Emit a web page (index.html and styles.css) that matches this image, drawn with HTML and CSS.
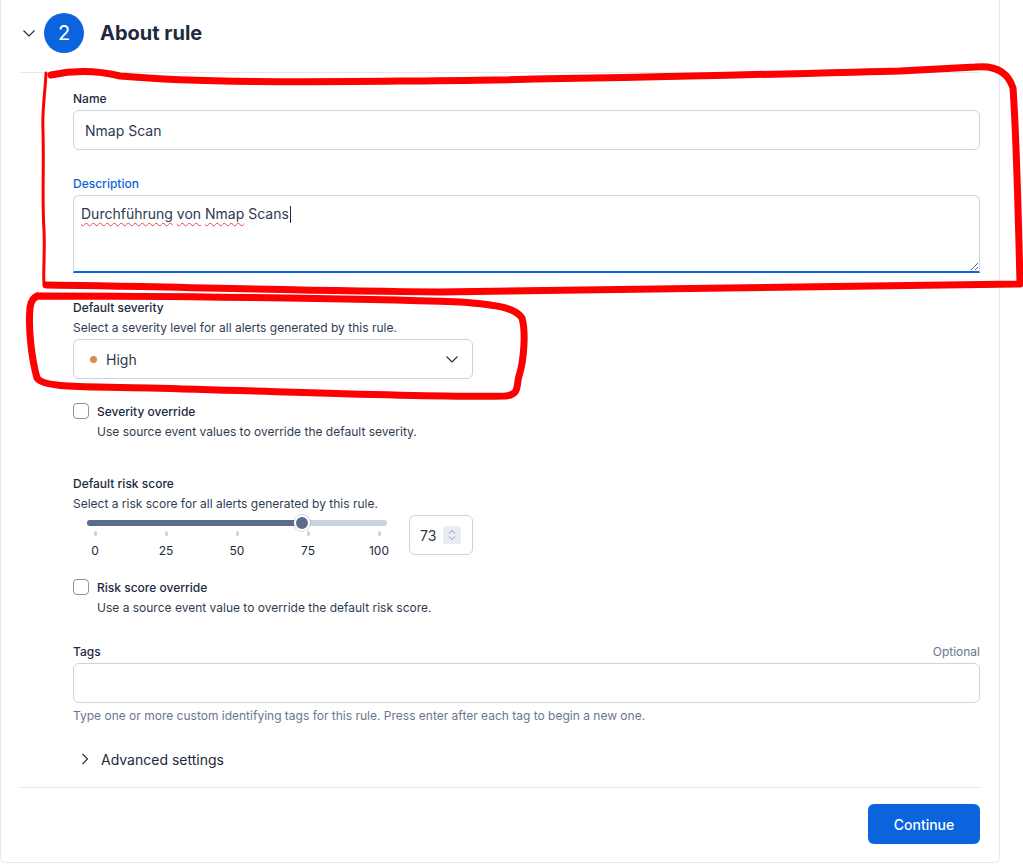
FILE: index.html
```html
<!DOCTYPE html>
<html lang="de">
<head>
<meta charset="utf-8">
<title>About rule</title>
<link rel="stylesheet" href="styles.css">
</head>
<body>
<div class="panel">
  <header class="step-header">
    <svg class="chev-down" width="16" height="16" viewBox="0 0 16 16"><path d="M2.5 5.5 8 11l5.5-5.5" fill="none" stroke="#1d2a3e" stroke-width="1.1"/></svg>
    <span class="step-num">2</span>
    <h2 class="step-title">About rule</h2>
  </header>

  <div class="form">
    <div class="row">
      <div class="label label-first">Name</div>
      <div class="field"><span class="value">Nmap Scan</span></div>
    </div>

    <div class="row row-desc">
      <div class="label label-active">Description</div>
      <div class="textarea"><span class="typo">Durchführung</span> <span class="typo">von</span> <span class="typo">Nmap</span> Scans<span class="caret"></span></div>
    </div>

    <div class="row row-severity">
      <div class="label">Default severity</div>
      <div class="help-dark">Select a severity level for all alerts generated by this rule.</div>
      <div class="select">
        <span class="dot"></span>
        <span class="value">High</span>
        <svg class="select-chev" width="16" height="16" viewBox="0 0 16 16"><path d="M2.5 5.5 8 11l5.5-5.5" fill="none" stroke="#1d2a3e" stroke-width="1.1"/></svg>
      </div>
    </div>

    <div class="row row-check">
      <div class="check-line"><span class="checkbox"></span><span class="check-label">Severity override</span></div>
      <div class="check-help">Use source event values to override the default severity.</div>
    </div>

    <div class="row row-risk">
      <div class="label">Default risk score</div>
      <div class="help-dark">Select a risk score for all alerts generated by this rule.</div>
      <div class="slider-row">
        <div class="range">
          <div class="track">
            <div class="fill" style="width:215px"></div>
            <span class="thumb" style="left:207px"></span>
          </div>
          <div class="ticks">
            <div class="tick"><span class="tick-mark"></span><span class="tick-label">0</span></div>
            <div class="tick"><span class="tick-mark"></span><span class="tick-label">25</span></div>
            <div class="tick"><span class="tick-mark"></span><span class="tick-label">50</span></div>
            <div class="tick"><span class="tick-mark"></span><span class="tick-label">75</span></div>
            <div class="tick"><span class="tick-mark"></span><span class="tick-label">100</span></div>
          </div>
        </div>
        <div class="number">
          <span class="number-value">73</span>
          <span class="spinner">
            <svg width="18" height="18" viewBox="0 0 18 18"><path d="M6 7.5 9 4.5l3 3M6 10.5l3 3 3-3" fill="none" stroke="#8a96a8" stroke-width="1"/></svg>
          </span>
        </div>
      </div>
    </div>

    <div class="row row-check2">
      <div class="check-line"><span class="checkbox"></span><span class="check-label">Risk score override</span></div>
      <div class="check-help">Use a source event value to override the default risk score.</div>
    </div>

    <div class="row row-tags">
      <div class="label label-split"><span>Tags</span><span class="optional">Optional</span></div>
      <div class="field"></div>
      <div class="help-light">Type one or more custom identifying tags for this rule. Press enter after each tag to begin a new one.</div>
    </div>

    <div class="row row-adv">
      <svg class="chev-right" width="16" height="16" viewBox="0 0 16 16"><path d="M5.5 3 10.5 8l-5 5" fill="none" stroke="#1d2a3e" stroke-width="1.1"/></svg>
      <span class="adv-text">Advanced settings</span>
    </div>
  </div>

  <footer class="footer">
    <button class="btn">Continue</button>
  </footer>
</div>

<svg class="marks" width="1023" height="865" viewBox="0 0 1023 865">
  <g fill="none" stroke="#ff0000" stroke-linecap="round" stroke-linejoin="round">
    <path stroke-width="7" d="M51 75 C70 71 95 70 120 76 C200 83 300 82 400 81 C550 80 700 76 900 71 L975 67 C995 65 1008 72 1013 88 C1016 130 1018 200 1020 284 C800 286 600 289 440 292 C300 291 150 286 46 285"/>
    <path stroke-width="3" d="M46 73 C45 95 42 110 43 130 C44 170 42 200 44 230 C45 255 43 270 44 284"/>
    <path stroke-width="7" d="M37 296 C150 296 350 298 460 302 C500 305 515 308 522 318 C526 332 524 360 519 376 C516 386 520 395 505 396 C440 398 300 392 150 388 C90 386 45 389 37 378 C32 360 28 330 30 308 C31 300 34 297 38 296"/>
  </g>
</svg>
</body>
</html>
```
FILE: styles.css
```css
* { box-sizing: border-box; }
html, body { margin: 0; background: #ffffff; }
body {
  font-family: Inter, "Noto Sans", "Liberation Sans", sans-serif;
  color: #1d2a3e;
  position: relative;
  width: 1023px;
  height: 865px;
  overflow: hidden;
}

.panel {
  width: 1000px;
  border: 1px solid #e3e8f2;
  border-top: none;
  border-radius: 0 0 6px 6px;
  padding: 0 19px 18px 19px;
}

.step-header {
  height: 73px;
  display: flex;
  align-items: center;
  padding-bottom: 6px;
  border-bottom: 1px solid #e3e8f2;
}
.chev-down { margin-left: 1px; flex: none; }
.step-num {
  width: 40px; height: 40px; border-radius: 50%;
  background: #0b64dd; color: #fff;
  display: flex; align-items: center; justify-content: center;
  font-size: 20px; font-weight: 400;
  margin-left: 7px;
}
.step-title {
  margin: 0 0 0 16px;
  font-size: 20px; font-weight: 700; color: #1d2a3e;
}

.form {
  padding: 16px 0 18px 53px;
  display: flex; flex-direction: column;
}
.row { display: flex; flex-direction: column; }
.label {
  font-size: 12px; line-height: 18px; font-weight: 500; color: #1d2a3e;
  padding-top: 1px;
  margin-bottom: 2px;
}
.label-first { padding-top: 2px; margin-top: -1px; }
.label-active { color: #0b64dd; }
.label-split { display: flex; justify-content: space-between; }
.optional { font-weight: 400; color: #6a7790; }

.field {
  height: 40px;
  border: 1px solid #cad3e2;
  border-radius: 6px;
  display: flex; align-items: center;
  padding: 0 11px;
  font-size: 14px; color: #2b394f;
}
.row-desc { margin-top: 24px; }
.textarea {
  height: 78px;
  border: 1px solid #cad3e2;
  border-bottom: 2px solid #0b64dd;
  border-radius: 6px 6px 0 0;
  padding: 8px 7px;
  font-size: 14px; line-height: 20px; color: #2b394f;
  resize: vertical; overflow: auto;
}
.typo {
  text-decoration: underline wavy #e5484d;
  text-decoration-thickness: 1px;
  text-underline-offset: 3px;
}
.caret {
  display: inline-block; width: 1px; height: 17px;
  background: #1d2a3e; vertical-align: -4px; margin-left: 1px;
}

.row-severity { margin-top: 25px; }
.help-dark { font-size: 12px; line-height: 18px; color: #2f3d52; margin-top: 0; margin-bottom: 2px; }
.select {
  width: 400px; height: 40px;
  border: 1px solid #cad3e2; border-radius: 6px;
  display: flex; align-items: center;
  padding: 0 12px 0 16px;
  font-size: 14px; color: #2b394f;
}
.dot { width: 7px; height: 7px; border-radius: 50%; background: #da8b45; margin-right: 9px; }
.select .value { flex: 1; }
.select-chev { flex: none; }

.row-check { margin-top: 24px; }
.row-check2 { margin-top: 21px; }
.check-line { display: flex; align-items: center; height: 16px; }
.checkbox {
  width: 16px; height: 16px;
  border: 1px solid #8594ab; border-radius: 4px;
  margin-right: 8px; flex: none;
}
.check-label { font-size: 12px; font-weight: 500; color: #1d2a3e; }
.check-help { font-size: 12px; line-height: 18px; color: #2f3d52; margin: 4px 0 0 24px; }

.row-risk { margin-top: 33px; }
.slider-row { display: flex; align-items: flex-start; gap: 8px; margin-top: -2px; }
.range { width: 328px; padding-top: 7px; height: 45px; }
.track {
  position: relative;
  margin-left: 14px; width: 300px; height: 6px;
  background: #cad3e2; border-radius: 3px;
}
.fill { height: 6px; background: #5a6d8c; border-radius: 3px; }
.thumb {
  position: absolute; top: -5px;
  width: 16px; height: 16px; border-radius: 50%;
  background: #5a6d8c; border: 2px solid #fff;
  box-shadow: 0 0 0 1px rgba(90,109,140,0.25);
}
.ticks {
  display: flex; justify-content: space-between;
  width: 308px; margin-left: 10px; margin-top: 5px;
}
.tick { width: 24px; display: flex; flex-direction: column; align-items: center; }
.tick-mark { width: 3px; height: 5px; border-radius: 2px; background: #cad3e2; }
.tick-label { font-size: 12px; line-height: 16px; margin-top: 7px; color: #1d2a3e; }
.number {
  margin-top: 2px;
  width: 64px; height: 40px;
  border: 1px solid #cad3e2; border-radius: 6px;
  display: flex; align-items: center;
  padding-left: 10px;
  font-size: 14px; color: #2b394f;
}
.number-value { width: 23px; }
.spinner {
  width: 18px; height: 18px; background: #e9edf3; border-radius: 2px;
  display: flex;
}

.row-tags { margin-top: 25px; }
.help-light { font-size: 12px; line-height: 18px; color: #6a7790; margin-top: 4px; }

.row-adv {
  margin-top: 24px; flex-direction: row; align-items: center; height: 20px;
  padding-left: 4px;
}
.chev-right { flex: none; }
.adv-text { margin-left: 8px; font-size: 14px; color: #1d2a3e; }

.footer {
  border-top: 1px solid #e3e8f2;
  padding-top: 16px;
  display: flex; justify-content: flex-end;
}
.btn {
  width: 112px; height: 40px;
  background: #0b64dd; color: #fff; border: none; border-radius: 6px;
  font-family: inherit; font-size: 14px; font-weight: 500;
}

.marks { position: absolute; top: 0; left: 0; pointer-events: none; }
```
